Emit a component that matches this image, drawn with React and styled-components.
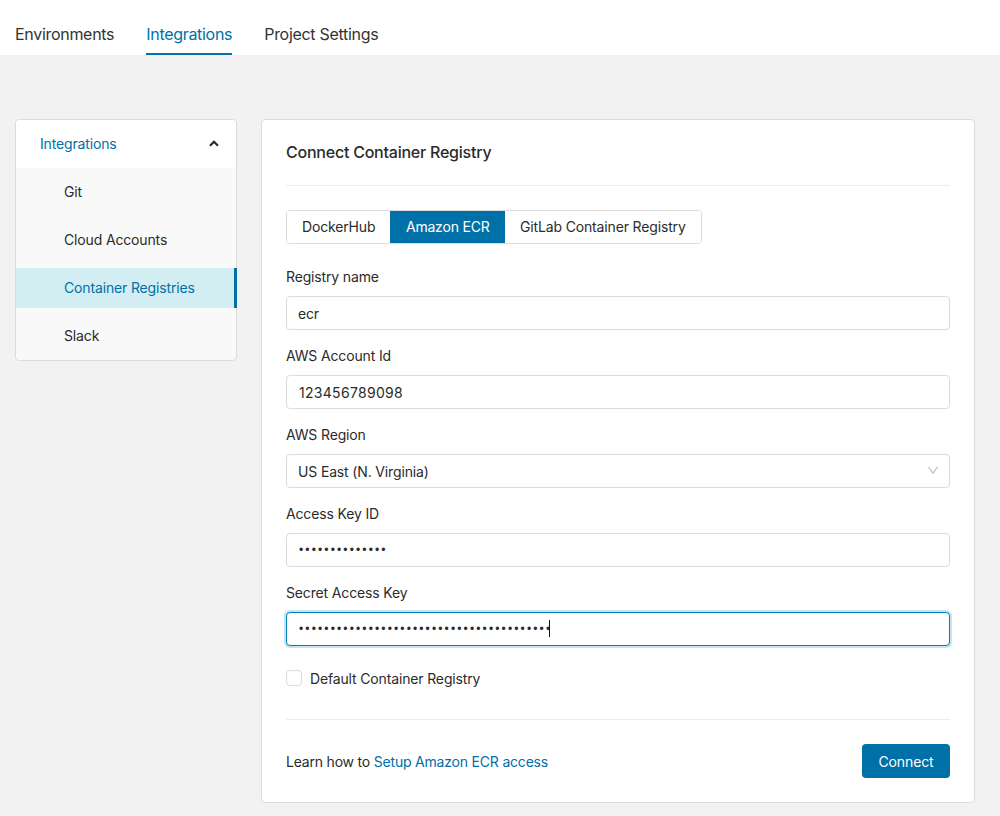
import React from 'react';
import styled, { createGlobalStyle } from 'styled-components';

const GlobalStyle = createGlobalStyle`
  html, body {
    margin: 0;
    padding: 0;
    background: #f2f2f2;
    color: #2b2b2b;
    font-family: Inter, "Liberation Sans", sans-serif;
    letter-spacing: -0.15px;
  }
  * {
    box-sizing: border-box;
  }
`;

const Nav = styled.nav`
  height: 55px;
  background: #fff;
  display: flex;
  gap: 32px;
  padding: 0 15px;
`;

const NavTab = styled.a`
  display: flex;
  align-items: center;
  height: 55px;
  padding-top: 12px;
  font-size: 16px;
  letter-spacing: -0.3px;
  color: ${(p) => (p.$active ? '#0070a8' : '#333')};
  box-shadow: ${(p) => (p.$active ? 'inset 0 -2px 0 #0070a8' : 'none')};
`;

const Page = styled.main`
  display: flex;
  align-items: flex-start;
  gap: 24px;
  padding: 64px 25px 13px 15px;
`;

const Sidebar = styled.aside`
  width: 222px;
  background: #f9f9f9;
  border: 1px solid #dcdcdc;
  border-radius: 4px;
`;

const SideHeader = styled.div`
  height: 48px;
  background: #fff;
  border-radius: 4px 4px 0 0;
  display: flex;
  align-items: center;
  justify-content: space-between;
  padding: 0 17px 2px 24px;
  font-size: 14px;
  color: #0070a8;
`;

const SideItem = styled.a`
  display: flex;
  align-items: center;
  height: ${(p) => (p.$active ? '40px' : '48px')};
  margin: ${(p) => (p.$active ? '4px -1px 4px 0' : '0')};
  padding: 0 0 2px 48px;
  font-size: 14px;
  color: ${(p) => (p.$active ? '#0070a8' : '#2b2b2b')};
  background: ${(p) => (p.$active ? '#d3eef3' : 'transparent')};
  border-right: ${(p) => (p.$active ? '3px solid #0070a8' : 'none')};
`;

const Card = styled.section`
  flex: 1;
  background: #fff;
  border: 1px solid #dcdcdc;
  border-radius: 4px;
  padding: 0 24px;
`;

const CardTitle = styled.h2`
  margin: 0;
  height: 66px;
  display: flex;
  align-items: center;
  font-size: 16px;
  font-weight: 500;
  letter-spacing: -0.23px;
  color: #2b2b2b;
  padding-bottom: 2px;
  border-bottom: 1px solid #ededed;
`;

const Segments = styled.div`
  display: inline-flex;
  margin-top: 24px;
  height: 34px;
  border: 1px solid #dcdcdc;
  border-radius: 4px;
  overflow: hidden;
  vertical-align: top;
`;

const Segment = styled.button`
  border: 0;
  margin: ${(p) => (p.$active ? '-1px 0' : '0')};
  padding: 0 ${(p) => (p.$active ? '15.5px' : '15px')} 2px;
  font: inherit;
  font-size: 14px;
  letter-spacing: ${(p) => (p.$active ? '-0.2px' : '-0.15px')};
  color: ${(p) => (p.$active ? '#fff' : '#2b2b2b')};
  background: ${(p) => (p.$active ? '#0070a8' : '#fff')};
`;

const Field = styled.div`
  margin-top: ${(p) => (p.$first ? '23px' : '16px')};
`;

const Label = styled.label`
  display: block;
  height: 20px;
  margin-bottom: 9px;
  line-height: 20px;
  font-size: 14px;
  color: #2b2b2b;
`;

const Control = styled.div`
  position: relative;
  height: 34px;
`;

const Input = styled.input`
  display: block;
  width: 100%;
  height: 34px;
  padding: 0 ${(p) => (p.$digits ? '12px' : '11px')};
  font-family: inherit;
  font-size: 14px;
  letter-spacing: ${(p) => (p.$digits ? '0.3px' : '-0.15px')};
  color: #2b2b2b;
  background: #fff;
  border: 1px solid ${(p) => (p.$focused ? '#0080b3' : '#dcdcdc')};
  border-radius: 4px;
  box-shadow: ${(p) => (p.$focused ? '0 0 0 2px #c3e4f0' : 'none')};
  outline: none;
  appearance: none;
  caret-color: transparent;

  &[type='password'] {
    padding-left: 12px;
    font-family: 'Liberation Sans', sans-serif;
    font-size: 12px;
    letter-spacing: 2.13px;
  }
`;

const Select = styled(Input).attrs({ as: 'select' })``;

const Chevron = styled.svg`
  position: absolute;
  top: 12px;
  right: 12px;
  width: 10px;
  height: 10px;
  fill: none;
  stroke: #bbb;
  stroke-width: 1.2;
`;

const Caret = styled.span`
  position: absolute;
  top: 8px;
  left: 263px;
  width: 1px;
  height: 17px;
  background: #111;
`;

const CheckRow = styled.label`
  display: flex;
  align-items: center;
  gap: 8px;
  margin-top: 24px;
  height: 16px;
  font-size: 14px;
  color: #2b2b2b;
`;

const CheckBox = styled.span`
  width: 16px;
  height: 16px;
  background: #fff;
  border: 1px solid #dcdcdc;
  border-radius: 4px;
`;

const Footer = styled.footer`
  display: flex;
  align-items: center;
  justify-content: space-between;
  margin-top: 33px;
  padding: 24px 0;
  border-top: 1px solid #ededed;
  font-size: 14px;
  letter-spacing: -0.2px;
  color: #2b2b2b;
`;

const FooterLink = styled.a`
  color: #0070a8;
`;

const Primary = styled.button`
  width: 88px;
  height: 34px;
  border: 0;
  border-radius: 4px;
  font: inherit;
  font-size: 14px;
  letter-spacing: -0.1px;
  color: #fff;
  background: #0070a8;
`;

export default function App() {
  return (
    <>
      <GlobalStyle />
      <Nav>
        <NavTab>Environments</NavTab>
        <NavTab $active>Integrations</NavTab>
        <NavTab>Project Settings</NavTab>
      </Nav>
      <Page>
        <Sidebar>
          <SideHeader>
            Integrations
            <svg width="10" height="7" viewBox="0 0 10 7" fill="none" stroke="#2b2b2b" strokeWidth="2.2">
              <path d="M1 5.8 L5 1.8 L9 5.8" />
            </svg>
          </SideHeader>
          <SideItem>Git</SideItem>
          <SideItem>Cloud Accounts</SideItem>
          <SideItem $active>Container Registries</SideItem>
          <SideItem>Slack</SideItem>
        </Sidebar>
        <Card>
          <CardTitle>Connect Container Registry</CardTitle>
          <Segments>
            <Segment>DockerHub</Segment>
            <Segment $active>Amazon ECR</Segment>
            <Segment>GitLab Container Registry</Segment>
          </Segments>
          <Field $first>
            <Label>Registry name</Label>
            <Control>
              <Input readOnly value="ecr" />
            </Control>
          </Field>
          <Field>
            <Label>AWS Account Id</Label>
            <Control>
              <Input $digits readOnly value="123456789098" />
            </Control>
          </Field>
          <Field>
            <Label>AWS Region</Label>
            <Control>
              <Select defaultValue="us-east-1">
                <option value="us-east-1">US East (N. Virginia)</option>
              </Select>
              <Chevron viewBox="0 0 10 10">
                <path d="M0.5 1 L5 7.2 L9.5 1" />
              </Chevron>
            </Control>
          </Field>
          <Field>
            <Label>Access Key ID</Label>
            <Control>
              <Input readOnly type="password" value="AKIAIOSFODNN7E" />
            </Control>
          </Field>
          <Field>
            <Label>Secret Access Key</Label>
            <Control>
              <Input $focused readOnly type="password" value="wJalrXUtnFEMIK7MDENGbPxRfiCYEXAMPLEKEY12" />
              <Caret />
            </Control>
          </Field>
          <CheckRow>
            <CheckBox />
            Default Container Registry
          </CheckRow>
          <Footer>
            <span>
              Learn how to <FooterLink>Setup Amazon ECR access</FooterLink>
            </span>
            <Primary>Connect</Primary>
          </Footer>
        </Card>
      </Page>
    </>
  );
}
